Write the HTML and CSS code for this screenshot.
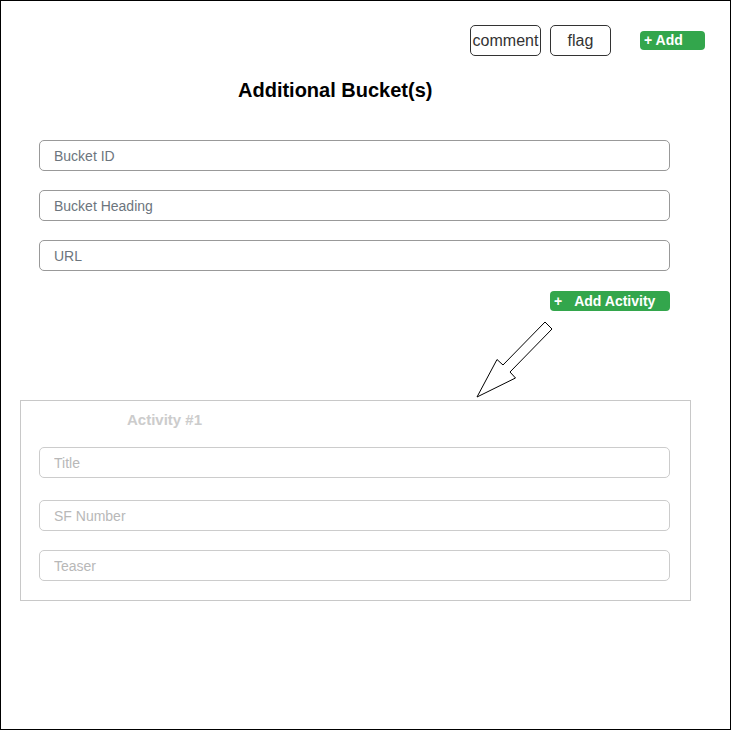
FILE: index.html
```html
<!DOCTYPE html>
<html>
<head>
<meta charset="utf-8">
<link rel="stylesheet" href="styles.css">
</head>
<body>
<div class="frame">
  <div class="toolbar">
    <button class="outline-btn comment">comment</button>
    <button class="outline-btn flag">flag</button>
    <button class="green-btn add-top">+ Add</button>
  </div>
  <h1 class="title">Additional Bucket(s)</h1>
  <div class="form">
    <input class="field" type="text" placeholder="Bucket ID">
    <input class="field" type="text" placeholder="Bucket Heading">
    <input class="field" type="text" placeholder="URL">
    <div class="action-row">
      <button class="green-btn add-activity"><span class="plus">+</span>Add Activity</button>
    </div>
  </div>
  <svg class="arrow" width="729" height="89" viewBox="1 310 729 89">
    <polygon points="477,396 497,358.5 503,364 545,321 552,328 510,371 515.5,377" fill="#fff" stroke="#000" stroke-width="1" stroke-linejoin="miter"/>
  </svg>
  <div class="panel">
    <div class="panel-title">Activity #1</div>
    <input class="field light f1" type="text" placeholder="Title">
    <input class="field light f2" type="text" placeholder="SF Number">
    <input class="field light f3" type="text" placeholder="Teaser">
  </div>
</div>
</body>
</html>
```

FILE: styles.css
```css
* { box-sizing: border-box; }
html, body { margin: 0; padding: 0; background: #fff; }
body { font-family: "Liberation Sans", Arial, sans-serif; }

.frame {
  width: 731px;
  height: 730px;
  border: 1px solid #000;
  background: #fff;
}

.toolbar {
  display: flex;
  align-items: center;
  justify-content: flex-end;
  padding: 24px 24px 0 0;
  height: 54px;
}

.outline-btn {
  height: 31px;
  border: 1px solid #333;
  border-radius: 5px;
  background: #fff;
  color: #333;
  font-family: "Liberation Sans", Arial, sans-serif;
  font-size: 16px;
  padding: 2px 0 0 0;
  text-align: center;
}
.comment { width: 71px; }
.flag { width: 61px; margin-left: 9px; }

.green-btn {
  background: #33a64c;
  color: #fff;
  border: none;
  border-radius: 4px;
  font-family: "Liberation Sans", Arial, sans-serif;
  font-weight: bold;
  font-size: 14px;
  text-align: left;
  padding: 0 0 0 4px;
  height: 19px;
  line-height: 19px;
}
.add-top { width: 65px; margin-left: 29px; margin-right: 1px; height: 19px; margin-top: 1px; }

.title {
  margin: 24px 0 0 0;
  padding-left: 237px;
  font-size: 20px;
  font-weight: bold;
  line-height: 23px;
  color: #000;
}

.form {
  padding-left: 38px;
  width: 669px;
  display: flex;
  flex-direction: column;
  margin-top: 38px;
}

.field {
  display: block;
  width: 631px;
  height: 31px;
  border: 1px solid #999;
  border-radius: 5px;
  padding: 0 14px;
  font-family: "Liberation Sans", Arial, sans-serif;
  font-size: 14px;
  color: #555;
  background: #fff;
  outline: none;
}
.field + .field { margin-top: 19px; }
.field::placeholder { color: #6c757d; }

.action-row {
  display: flex;
  justify-content: flex-end;
  margin-top: 20px;
}
.add-activity { width: 120px; height: 20px; line-height: 20px; }
.plus { margin-right: 12px; }

.arrow { display: block; }

.panel {
  margin-left: 19px;
  width: 671px;
  height: 201px;
  border: 1px solid #c8c8c8;
  padding-top: 10px;
}
.panel-title {
  padding-left: 106px;
  font-size: 15px;
  font-weight: bold;
  line-height: 18px;
  color: #cccccc;
}
.panel .field { margin-left: 18px; }
.field.light { border-color: #cccccc; }
.field.light::placeholder { color: #b8b8b8; }
.panel .f1 { margin-top: 18px; }
.panel .f2 { margin-top: 22px; }
.panel .f3 { margin-top: 19px; }
```
